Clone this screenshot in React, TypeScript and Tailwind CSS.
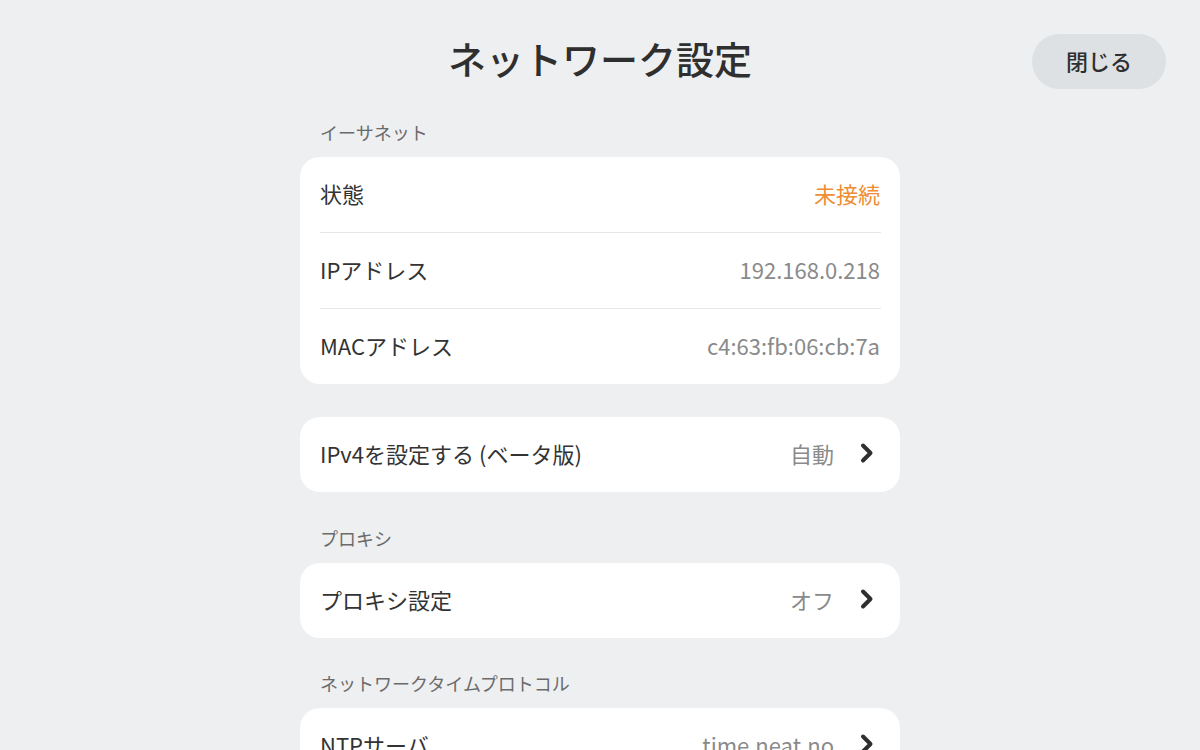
import React from "react";

const font = { fontFamily: '"Noto Sans CJK JP", "Noto Sans", sans-serif' };

function Chevron() {
  return (
    <svg width="16" height="24" viewBox="0 0 16 24" className="shrink-0">
      <path
        d="M4 4.5 L11.5 12 L4 19.5"
        fill="none"
        stroke="#2f2f2f"
        strokeWidth="4"
        strokeLinecap="round"
        strokeLinejoin="round"
      />
    </svg>
  );
}

function SectionLabel({ children, className = "" }: { children: React.ReactNode; className?: string }) {
  return <div className={`px-5 text-[18px] leading-[26px] text-[#6b6b6b] ${className}`}>{children}</div>;
}

function InfoRow({ label, value, valueClass = "text-[#8a8a8a]" }: { label: string; value: string; valueClass?: string }) {
  return (
    <div className="flex h-[75px] items-center justify-between px-5 pb-[3px]">
      <span className="text-[22px] text-[#333]">{label}</span>
      <span className={`text-[22px] ${valueClass}`}>{value}</span>
    </div>
  );
}

function LinkRow({ label, value }: { label: string; value: string }) {
  return (
    <div className="flex h-[75px] items-center justify-between pl-5 pr-[25px] pb-[3px]">
      <span className="text-[22px] text-[#333]">{label}</span>
      <div className="flex items-center gap-[25px]">
        <span className="text-[22px] text-[#8a8a8a]">{value}</span>
        <Chevron />
      </div>
    </div>
  );
}

export default function App() {
  return (
    <div className="min-h-screen bg-[#eeeff1]" style={font}>
      {/* ==== HEADER ==== */}
      <div className="grid grid-cols-[1fr_auto_1fr] items-start pt-[34px]">
        <div />
        <h1 className="text-[38px] font-medium leading-[47px] text-[#2f2f2f]">ネットワーク設定</h1>
        <div className="flex justify-end pr-[34px]">
          <button className="h-[55px] w-[134px] rounded-full bg-[#dde1e3] pb-[2px] text-[22px] font-medium text-[#2f2f2f]">
            閉じる
          </button>
        </div>
      </div>

      <div className="mx-auto w-[600px]">
        {/* ==== ETHERNET ==== */}
        <SectionLabel className="mt-[30px]">イーサネット</SectionLabel>
        <div className="mt-3 rounded-[20px] bg-white">
          <InfoRow label="状態" value="未接続" valueClass="text-[#ee8d33]" />
          <div className="ml-5 mr-[19px] h-px bg-[#e6e7e8]" />
          <InfoRow label="IPアドレス" value="192.168.0.218" />
          <div className="ml-5 mr-[19px] h-px bg-[#e6e7e8]" />
          <InfoRow label="MACアドレス" value="c4:63:fb:06:cb:7a" />
        </div>

        <div className="mt-[33px] rounded-[20px] bg-white">
          <LinkRow label="IPv4を設定する (ベータ版)" value="自動" />
        </div>

        {/* ==== PROXY ==== */}
        <SectionLabel className="mt-[33px]">プロキシ</SectionLabel>
        <div className="mt-3 rounded-[20px] bg-white">
          <LinkRow label="プロキシ設定" value="オフ" />
        </div>

        {/* ==== NTP ==== */}
        <SectionLabel className="mt-[32px]">ネットワークタイムプロトコル</SectionLabel>
        <div className="mt-3 rounded-[20px] bg-white">
          <LinkRow label="NTPサーバ" value="time.neat.no" />
        </div>
      </div>
    </div>
  );
}
